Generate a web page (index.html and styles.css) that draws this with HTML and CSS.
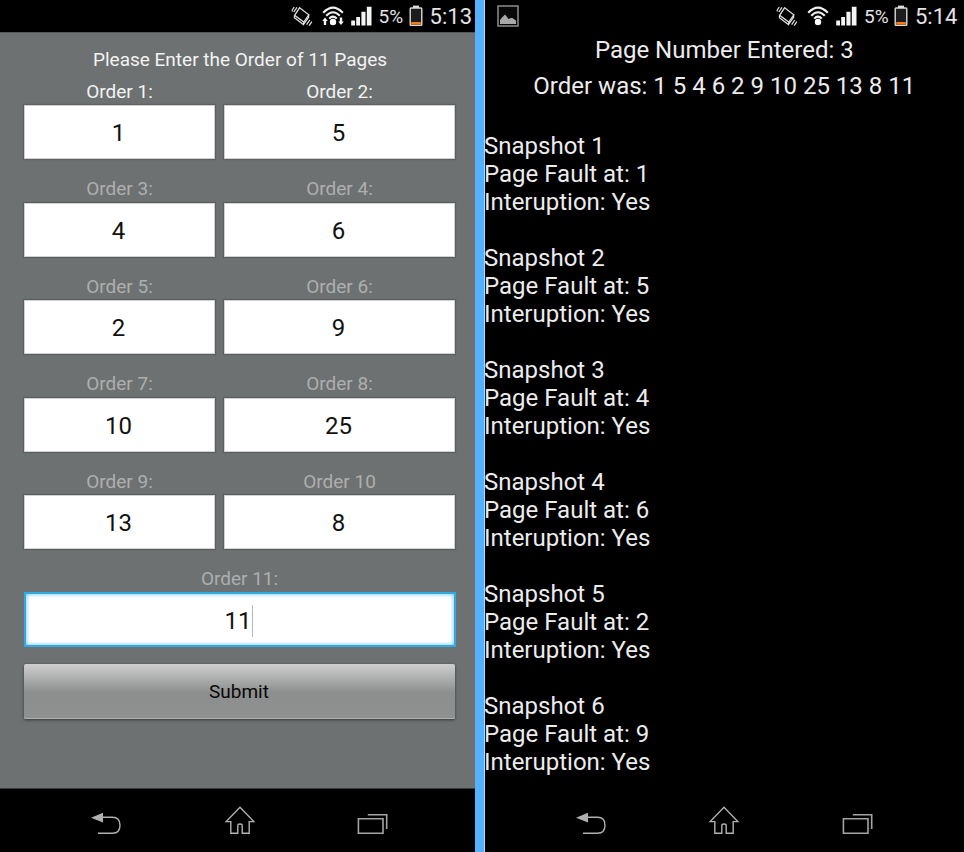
FILE: index.html
```html
<!DOCTYPE html>
<html lang="en">
<head>
<meta charset="utf-8">
<title>Page Order</title>
<link rel="stylesheet" href="styles.css">
</head>
<body>
<svg class="defs" aria-hidden="true">
  <symbol id="vibrate" viewBox="0 0 22 22">
    <g fill="none" stroke="#dcdcdc" stroke-width="1.3">
      <path d="M8.6 2.8L17.8 9.8L12.8 17L3.6 10.4Z"/>
      <path d="M3.6 10.4L3.4 12.8L12.4 19.6L12.8 17M12.4 19.6L17.6 12.4V9.8"/>
      <path d="M1 5.5L3.2 2M2.8 7L6 2.4M.9 5.5L1.6 6.4M15.6 19.6L18.8 15M18.2 20.6L20.8 16.6"/>
    </g>
  </symbol>
  <symbol id="wifi" viewBox="0 0 22 22">
    <g fill="none" stroke="#f0f0f0" stroke-width="2.1">
      <path d="M1.2 7.8Q11 -2.6 20.8 7.8"/>
      <path d="M4.2 10.8Q11 3.6 17.8 10.8"/>
      <path d="M7.2 13.6Q11 9.6 14.8 13.6"/>
    </g>
    <circle cx="11" cy="17" r="3.2" fill="#fff"/>
  </symbol>
  <symbol id="traffic" viewBox="0 0 22 22">
    <path d="M3 12.6L5.8 16H4.2V20H1.8V16H.2ZM19 20L16.2 16.6H17.8V12.6H20.2V16.6H21.8Z" fill="#f4f4f4"/>
  </symbol>
  <symbol id="signal" viewBox="0 0 22 22">
    <path d="M.2 15.4H4V20.4H.2ZM5.2 12H9V20.4H5.2ZM10.4 6.8H14.5V20.4H10.4ZM15.8 1.8H20.5V20.4H15.8Z" fill="#f4f4f4"/>
  </symbol>
  <symbol id="battery" viewBox="0 0 14 22">
    <path d="M4 .6H10V3H4Z" fill="#ddd"/>
    <rect x="1.2" y="3" width="11.6" height="17.4" rx=".8" fill="#1c1c1c" stroke="#dcdcdc" stroke-width="1.4"/>
    <path d="M2.2 17H11.8V19.6H2.2Z" fill="#f57c14"/>
  </symbol>
  <symbol id="back" viewBox="0 0 32 32">
    <path d="M1 13.8L13 8.8V18.4Z" fill="#b0b0b0"/>
    <path d="M12 13.3H22.5Q30 13.3 30 21.3Q30 29.3 22.5 29.3H8" fill="none" stroke="#b0b0b0" stroke-width="1.4"/>
  </symbol>
  <symbol id="home" viewBox="0 0 32 32">
    <path d="M16 3.3L29.8 17.6H25.2V29.3H18.2V21.5Q18.2 20 16 20Q13.8 20 13.8 21.5V29.3H6.8V17.6H2.2Z" fill="none" stroke="#b0b0b0" stroke-width="1.4"/>
  </symbol>
  <symbol id="recent" viewBox="0 0 32 32">
    <path d="M1.4 14.8H26V29.3H1.4ZM10.8 10.7H29.7V25" fill="none" stroke="#a4a4a4" stroke-width="1.6"/>
  </symbol>
</svg>
<main class="board">
  <section class="phone entry">
    <header class="status">
      <svg class="icon"><use href="#vibrate"/></svg>
      <svg class="icon wifi"><use href="#wifi"/><use href="#traffic"/></svg>
      <svg class="icon bars"><use href="#signal"/></svg>
      <span class="percent">5%</span>
      <svg class="battery"><use href="#battery"/></svg>
      <span class="clock">5:13</span>
    </header>
    <form class="form">
      <h1 class="title"><span>Please Enter the Order of 11 Pages</span></h1>
      <div class="grid">
        <label class="field lit"><span>Order 1:</span><b class="box">1</b></label>
        <label class="field lit"><span>Order 2:</span><b class="box">5</b></label>
        <label class="field"><span>Order 3:</span><b class="box">4</b></label>
        <label class="field"><span>Order 4:</span><b class="box">6</b></label>
        <label class="field"><span>Order 5:</span><b class="box">2</b></label>
        <label class="field"><span>Order 6:</span><b class="box">9</b></label>
        <label class="field"><span>Order 7:</span><b class="box">10</b></label>
        <label class="field"><span>Order 8:</span><b class="box">25</b></label>
        <label class="field"><span>Order 9:</span><b class="box">13</b></label>
        <label class="field"><span>Order 10</span><b class="box">8</b></label>
        <label class="field wide"><span>Order 11:</span><b class="box focus">11<i class="caret"></i></b></label>
      </div>
      <button class="submit" type="button">Submit</button>
    </form>
    <nav class="nav">
      <svg><use href="#back"/></svg>
      <svg><use href="#home"/></svg>
      <svg><use href="#recent"/></svg>
    </nav>
  </section>
  <div class="divider"></div>
  <section class="phone result">
    <header class="status">
      <svg class="picture" viewBox="0 0 22 22"><rect x="1" y="1" width="20" height="20" fill="#080808" stroke="#858585" stroke-width="1.6"/><path d="M3 19V15L5 12.5L8 9.5L10 12L11.5 14L15 12.7L19 15.5V19Z" fill="#a8a8a8"/></svg>
      <svg class="icon"><use href="#vibrate"/></svg>
      <svg class="icon wifi"><use href="#wifi"/></svg>
      <svg class="icon bars"><use href="#signal"/></svg>
      <span class="percent">5%</span>
      <svg class="battery"><use href="#battery"/></svg>
      <span class="clock">5:14</span>
    </header>
    <div class="log">
      <p class="head">Page Number Entered: 3</p>
      <p class="head order">Order was: 1 5 4 6 2 9 10 25 13 8 11</p>
      <div class="snap"><p>Snapshot 1</p><p>Page Fault at: 1</p><p>Interuption: Yes</p></div>
      <div class="snap"><p>Snapshot 2</p><p>Page Fault at: 5</p><p>Interuption: Yes</p></div>
      <div class="snap"><p>Snapshot 3</p><p>Page Fault at: 4</p><p>Interuption: Yes</p></div>
      <div class="snap"><p>Snapshot 4</p><p>Page Fault at: 6</p><p>Interuption: Yes</p></div>
      <div class="snap"><p>Snapshot 5</p><p>Page Fault at: 2</p><p>Interuption: Yes</p></div>
      <div class="snap"><p>Snapshot 6</p><p>Page Fault at: 9</p><p>Interuption: Yes</p></div>
    </div>
    <nav class="nav">
      <svg><use href="#back"/></svg>
      <svg><use href="#home"/></svg>
      <svg><use href="#recent"/></svg>
    </nav>
  </section>
</main>
</body>
</html>
```
FILE: styles.css
```css
* { box-sizing: border-box; }
body { margin: 0; background: #000; font-family: Roboto, "Liberation Sans", sans-serif; }
p, h1 { margin: 0; font-weight: 400; }
b { font-weight: 400; }
.defs { display: none; }
.board { display: flex; width: 964px; height: 852px; overflow: hidden; }
.phone { display: flex; flex-direction: column; height: 852px; background: #000; overflow: hidden; }
.entry { width: 474.6px; }
.result { width: 479.4px; }
.divider { width: 10px; background: #53b1ff; border-right: 1px solid #b5dcff; }
.status { display: flex; flex: none; height: 32px; padding: 5px 3px 0 0; justify-content: flex-end; color: #e4e4e4; }
.result .status { padding-right: 7px; }
.icon { width: 22px; height: 22px; flex: none; }
.wifi { margin-left: 9px; }
.bars { margin-left: 7px; }
.percent { width: 26px; margin-left: 6px; font-size: 19px; line-height: 24px; }
.battery { width: 14px; height: 22px; margin-left: 4px; }
.clock { width: 42px; margin-left: 7px; font-size: 22px; line-height: 23px; white-space: nowrap; }
.picture { width: 22px; height: 22px; margin: 0 auto 0 12px; }
.form { flex: none; height: 757px; padding: 16px 0 0 24px; background: #6d7171; border-top: 1px solid #555959; border-bottom: 1px solid #3a3c3c; }
.title { width: 432px; height: 24px; text-align: center; font-size: 19px; line-height: 22px; color: #f3f3f3; }
.grid { display: grid; grid-template-columns: 191px 231px; column-gap: 9px; grid-auto-rows: 97.4px; }
.field { display: flex; flex-direction: column; padding-top: 8px; text-align: center; font-size: 19px; line-height: 22px; color: #adafaf; }
.lit { color: #f3f3f3; }
.wide { grid-column: 1 / 3; }
.box { display: flex; align-items: center; justify-content: center; height: 54px; margin-top: 2.4px; padding: 2px 2px 0 0; background: #fff; border: 1px solid #d0d0d0; box-shadow: 0 0 1px 1px #5c6060; font-size: 24px; color: #111; }
.focus { height: 55px; margin-right: -1px; border: 2px solid #2faae2; box-shadow: inset 0 0 4px #4cbcf0; }
.caret { width: 1px; height: 32px; background: #bbb; margin-left: 1px; }
.submit { display: block; width: 431px; height: 55px; margin-top: 7px; padding: 0 1px 0 0; border: 0; border-radius: 2px; background: linear-gradient(#cfcfcf, #a8a9a9 30%, #8d8f8e 52%, #8e908f); box-shadow: 0 1px 3px #333, inset 0 -1px #b0b0b0; font: 19px Roboto, sans-serif; color: #080808; }
.nav { display: flex; flex: none; height: 63px; padding: 15px 0 0 90px; gap: 101.5px; }
.nav svg { width: 32px; height: 32px; flex: none; }
.log { flex: none; height: 757px; color: #ececec; font-size: 24px; line-height: 28px; }
.head { text-align: center; line-height: 36px; }
.snap { margin: 0 0 28px -0.6px; }
.order { margin-bottom: 28px; }
```
